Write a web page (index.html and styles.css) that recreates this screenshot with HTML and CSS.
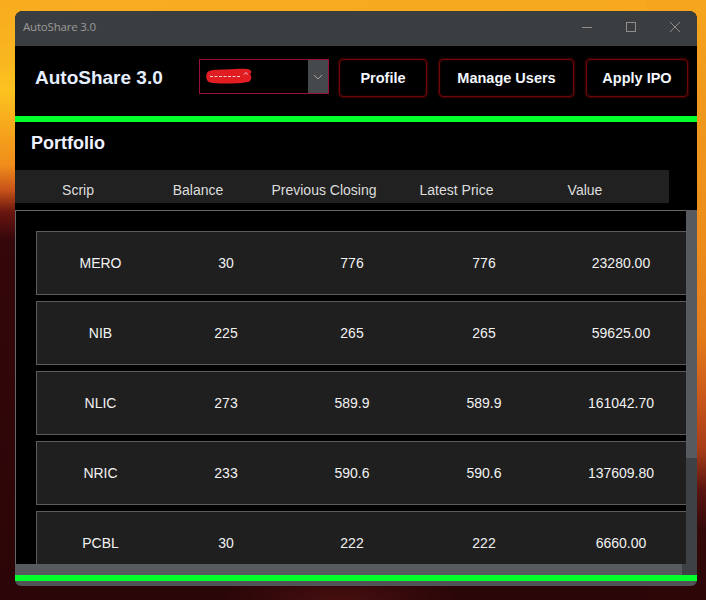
FILE: index.html
```html
<!DOCTYPE html>
<html>
<head>
<meta charset="utf-8">
<link rel="stylesheet" href="styles.css">
</head>
<body>
<div class="stage">
<div class="window">
  <div class="titlebar">
    <span class="title">AutoShare 3.0</span>
    <div class="controls">
      <span class="ctl"><svg width="12" height="12" viewBox="0 0 12 12"><path d="M1 6.5h10" stroke="#8e8e8e" stroke-width="1" fill="none"/></svg></span>
      <span class="ctl"><svg width="12" height="12" viewBox="0 0 12 12"><rect x="1.5" y="1.5" width="9" height="9" stroke="#8e8e8e" stroke-width="1" fill="none"/></svg></span>
      <span class="ctl"><svg width="12" height="12" viewBox="0 0 12 12"><path d="M1 1L11 11M11 1L1 11" stroke="#8e8e8e" stroke-width="1" fill="none"/></svg></span>
    </div>
  </div>
  <div class="header">
    <div class="logo">AutoShare 3.0</div>
    <div class="select">
      <div class="select-value">
        <svg class="redact" width="48" height="18" viewBox="0 0 48 18">
          <path d="M2 6C3 3 10 2.5 20 2.5S40 1 44 2.5C47 3.5 47 6 45 7C47 9 47 14 43 15C34 17 12 17 5 15.5C1 14.5 0.5 9 2 6Z" fill="#e21d22"/>
          <path d="M5 9.5H36" stroke="#f4d0d0" stroke-width="1" stroke-dasharray="3 1.5" fill="none"/>
          <path d="M39 7.5l2-2 1.5 2" stroke="#e8c8e0" stroke-width="1" fill="none"/>
        </svg>
      </div>
      <div class="select-arrow"><svg width="10" height="6" viewBox="0 0 10 6"><path d="M1 1L5 5L9 1" stroke="#a3a3a3" stroke-width="1" fill="none"/></svg></div>
    </div>
    <button class="btn btn-profile">Profile</button>
    <button class="btn btn-users">Manage Users</button>
    <button class="btn btn-ipo">Apply IPO</button>
  </div>
  <div class="accent"></div>
  <div class="section-title">Portfolio</div>
  <div class="thead">
    <span>Scrip</span><span>Balance</span><span>Previous Closing</span><span>Latest Price</span><span>Value</span>
  </div>
  <div class="tbody-wrap">
    <div class="tbody-view">
      <div class="rows">
        <div class="row"><span>MERO</span><span>30</span><span>776</span><span>776</span><span>23280.00</span></div>
        <div class="row"><span>NIB</span><span>225</span><span>265</span><span>265</span><span>59625.00</span></div>
        <div class="row"><span>NLIC</span><span>273</span><span>589.9</span><span>589.9</span><span>161042.70</span></div>
        <div class="row"><span>NRIC</span><span>233</span><span>590.6</span><span>590.6</span><span>137609.80</span></div>
        <div class="row"><span>PCBL</span><span>30</span><span>222</span><span>222</span><span>6660.00</span></div>
      </div>
    </div>
    <div class="vscroll"><div class="vthumb"></div></div>
  </div>
  <div class="hscroll"><div class="hthumb"></div><div class="corner"></div></div>
  <div class="accent"></div>
  <div class="bottom-frame"></div>
</div>
</div>
</body>
</html>
```
FILE: styles.css
```css
html, body {
  margin: 0;
  padding: 0;
  background: #2a0608;
  overflow: hidden;
}
.stage {
  width: 706px;
  height: 600px;
  box-sizing: border-box;
  padding: 11px 9px 14px 15px;
  background:
    linear-gradient(to bottom, #f8ab1f 0px, #f9b61f 60px, #fcc31f 90px, #f6a51c 130px, #ef8d1b 165px, #c8521a 190px, #6a1510 212px, #34070a 240px, #2b0507 600px) left top / 40px 100% no-repeat,
    linear-gradient(to bottom, #f7a61e 0px, #f09a1c 80px, #ec8c1b 250px, #e27a1a 340px, #c8561b 400px, #a63c18 450px, #5a1410 490px, #340809 530px, #2c0607 600px) right top / 60px 100% no-repeat,
    radial-gradient(ellipse 120px 30px at 340px 600px, rgba(90, 20, 20, 0.6), rgba(90, 20, 20, 0) 100%),
    linear-gradient(to right, #f8ac1f, #f7a81e) left top / 100% 30px no-repeat,
    #2a0608;
  font-family: "Liberation Sans", Arial, sans-serif;
}
.window {
  width: 682px;
  height: 575px;
  display: flex;
  flex-direction: column;
  background: #000;
  border-radius: 8px 8px 6px 6px;
  overflow: hidden;
}
.titlebar {
  height: 35px;
  flex-shrink: 0;
  background: #3b3e41;
  display: flex;
  align-items: center;
  padding: 0 0 4px 8px;
  box-sizing: border-box;
}
.title {
  font-family: "Open Sans", "Noto Sans", sans-serif;
  font-size: 11.5px;
  color: #9a9a9a;
  letter-spacing: -0.2px;
}
.controls {
  margin-left: auto;
  display: flex;
}
.ctl {
  width: 44px;
  display: flex;
  justify-content: center;
  align-items: center;
}
.header {
  height: 70px;
  flex-shrink: 0;
  box-sizing: border-box;
  display: flex;
  align-items: flex-start;
  padding: 13px 0 0 20px;
}
.logo {
  width: 164px;
  font-size: 19px;
  font-weight: bold;
  color: #e6efff;
  line-height: 37px;
}
.select {
  width: 130px;
  height: 35px;
  box-sizing: border-box;
  border: 1px solid #9c0f3b;
  display: flex;
}
.select-value {
  flex: 1;
  position: relative;
}
.redact {
  position: absolute;
  left: 5px;
  top: 7px;
}
.select-arrow {
  width: 20px;
  background: #46494c;
  display: flex;
  align-items: center;
  justify-content: center;
}
.btn {
  height: 38px;
  box-sizing: border-box;
  margin: 0 0 0 12px;
  padding: 0;
  background: #000;
  border: 1px solid #6e0707;
  border-radius: 4px;
  box-shadow: 0 0 2px 1px rgba(110, 0, 0, 0.55), inset 0 0 2px rgba(110, 0, 0, 0.6);
  color: #f4f6ff;
  font-family: "Liberation Sans", Arial, sans-serif;
  font-weight: bold;
  font-size: 14.5px;
}
.btn-profile { width: 88px; margin-left: 10px; }
.btn-users { width: 135px; }
.btn-ipo { width: 102px; }
.accent {
  height: 6px;
  flex-shrink: 0;
  background: #02ff2c;
}
.section-title {
  height: 48px;
  flex-shrink: 0;
  box-sizing: border-box;
  padding: 8px 0 0 16px;
  line-height: 26px;
  font-size: 18px;
  font-weight: bold;
  color: #eef2ff;
}
.thead {
  width: 654px;
  height: 33px;
  flex-shrink: 0;
  box-sizing: border-box;
  padding-top: 7px;
  line-height: 26px;
  background: #212121;
  display: grid;
  grid-template-columns: 126px 114px 138px 127px 130px;
  font-size: 14px;
  color: #dedede;
  text-align: center;
}
.tbody-wrap {
  margin-top: 7px;
  height: 354px;
  flex-shrink: 0;
  display: flex;
}
.tbody-view {
  flex: 1;
  overflow: hidden;
  border-top: 1px solid #666;
  border-left: 1px solid #666;
  padding: 20px 0 0 20px;
}
.rows {
  display: flex;
  flex-direction: column;
  align-items: flex-start;
  gap: 6px;
}
.row {
  width: 670px;
  height: 64px;
  flex-shrink: 0;
  box-sizing: border-box;
  border: 1px solid #5c5c5c;
  background: #1f1f1f;
  display: grid;
  grid-template-columns: 127px 124px 128px 136px 138px;
  align-items: center;
  font-size: 14px;
  color: #f2f2f2;
  text-align: center;
}
.vscroll {
  width: 11px;
  background: #3f4245;
}
.vthumb {
  height: 248px;
  background: #575b5f;
}
.hscroll {
  height: 11px;
  flex-shrink: 0;
  display: flex;
}
.hthumb {
  flex: 1;
  background: #575b5e;
}
.corner {
  width: 15px;
  background: #3f4245;
}
.bottom-frame {
  height: 5px;
  flex-shrink: 0;
  background: #505457;
}
```
